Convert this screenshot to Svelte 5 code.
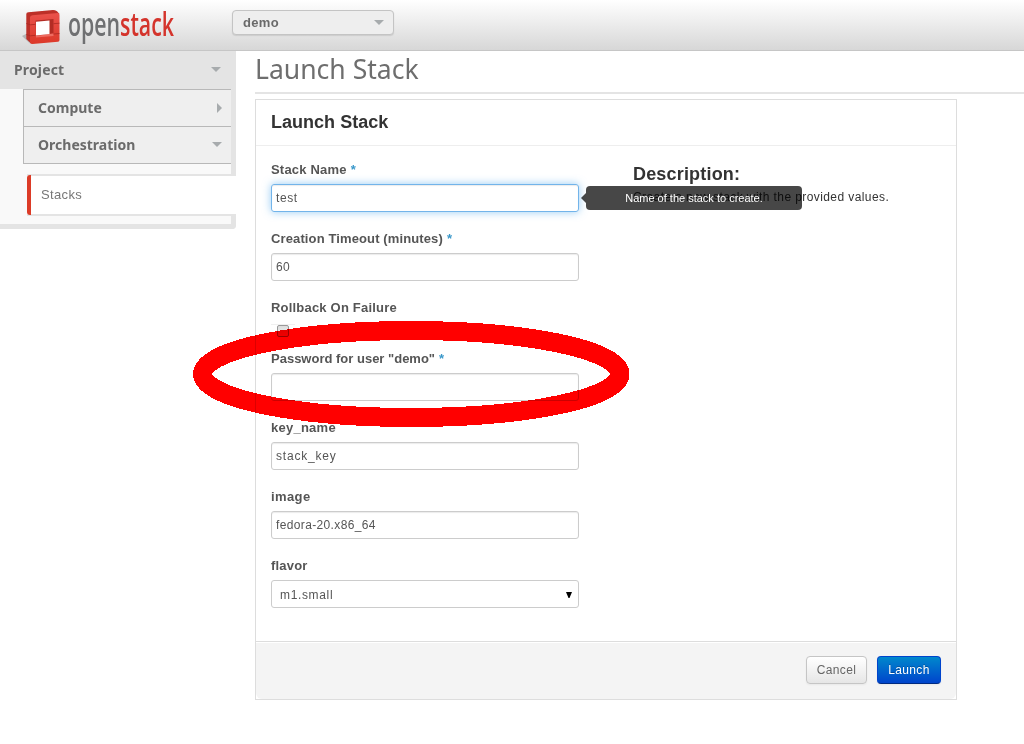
<script>
  const menu = [
    { label: 'Compute', open: false },
    { label: 'Orchestration', open: true }
  ];
  const fields = [
    { label: 'Stack Name', value: 'test', required: true, focused: true, help: 'Name of the stack to create.', ls: 0.2, vs: 0.6 },
    { label: 'Creation Timeout (minutes)', value: '60', required: true, ls: 0.12, vs: 0.3 },
    { label: 'Rollback On Failure', checkbox: true, ls: 0.2 },
    { label: 'Password for user "demo"', value: '', required: true, ls: 0 },
    { label: 'key_name', value: 'stack_key', ls: 0.25, vs: 0.8 },
    { label: 'image', value: 'fedora-20.x86_64', ls: 0.4, vs: 0.36 },
    { label: 'flavor', value: 'm1.small', select: true, ls: 0.2, vs: 0.65 }
  ];
</script>

<div class="page">
  <header>
    <svg class="logo" width="156" height="44" viewBox="0 0 156 44">
      <defs>
        <linearGradient id="face" x1="0" y1="0" x2="0" y2="1">
          <stop offset="0" stop-color="#ea524b" /><stop offset=".5" stop-color="#e2443a" /><stop offset="1" stop-color="#dc3929" />
        </linearGradient>
      </defs>
      <path d="M0 30l5-2.500 3 10z" fill="#aaa" opacity=".8" />
      <path d="M4.300 8q0-1.500 2-1.800L31 4q2 0 4 1.200L37.500 8 10 11.500 9.500 38 4.300 33z" fill="#bd3028" />
      <path d="M8 11.500q0-2 2.500-2.200L36 7q1.500 0 1.500 2V34q0 1.500-1.500 1.700L10.500 38q-2.500 0-2.500-2z" fill="url(#face)" />
      <path d="M13.500 14.500l18-1.500v14.500l-4 .5L14 30z" fill="#b32c24" />
      <path d="M14 30l13.500-2 4-.5v2.500L14 31.500z" fill="#ee6b60" />
      <path d="M14 15.800l13.500-1.200V28L14 29.500z" fill="#fff" />
      <path d="M4.300 17.500l4.200 1.300 5-.5M4.300 28.500l4.200 1.300 5-.5M31.500 17.700l6-.5M31.500 28l6-.5" fill="none" stroke="#a92a22" stroke-width=".8" />
      <text x="46" y="29.700" textLength="106" lengthAdjust="spacingAndGlyphs" fill="#6f7072">open<tspan fill="#d4342c">stack</tspan></text>
    </svg>
    <div class="tenant"><span>demo</span><i class="down"></i></div>
  </header>

  <div class="body">
    <aside>
      <div class="project"><span>Project</span><i class="down"></i></div>
      <nav>
        {#each menu as item}
          <div class="panel"><span>{item.label}</span><i class={item.open ? 'down' : 'right'}></i></div>
        {/each}
      </nav>
      <div class="active"><span>Stacks</span></div>
    </aside>

    <main>
      <h1><span>Launch Stack</span></h1>
      <section>
        <h3>Launch Stack</h3>
        <div class="content">
          <form>
            {#each fields as f}
              <div class="field" class:check={f.checkbox}>
                <div class="label"><span style="letter-spacing:{f.ls}px">{f.label}</span>{#if f.required}<b>*</b>{/if}</div>
                {#if f.checkbox}
                  <div class="checkwrap"><div class="box"></div></div>
                {:else}
                  <div class="input" class:focused={f.focused} class:select={f.select}>
                    <span style="letter-spacing:{f.vs ?? 0}px">{f.value}</span>
                    {#if f.select}<svg width="6" height="6" viewBox="0 0 6 6"><path d="M0 0h6L3.500 6h-1z" /></svg>{/if}
                    {#if f.help}<div class="tip">{f.help}</div>{/if}
                  </div>
                {/if}
              </div>
            {/each}
          </form>
          <div class="desc">
            <h4>Description:</h4>
            <p>Create a new stack with the provided values.</p>
          </div>
        </div>
        <footer>
          <div class="btn">Cancel</div>
          <div class="btn primary">Launch</div>
        </footer>
      </section>
    </main>
  </div>

  <svg class="ring" width="438" height="108" viewBox="0 0 438 108" shape-rendering="crispEdges">
    <ellipse cx="218.300" cy="54" rx="208.700" ry="43.500" fill="none" stroke="#f00" stroke-width="19" />
  </svg>
</div>

<style>
  :global(body) { background: #fff; overflow: hidden; }
  .page { position: relative; height: 744px; font: 12px/18px "Liberation Sans", sans-serif; color: #333; background: #fff; overflow: hidden; white-space: nowrap; }
  .page :global(*) { box-sizing: border-box; }
  header { display: flex; height: 51px; background: linear-gradient(#fff, #d7d7d7); border-bottom: 1px solid #c6c6c6; padding-left: 22px; }
  .logo { margin-top: 6px; flex: none; overflow: visible; }
  .logo text { font: 600 32px "Open Sans", sans-serif; }
  .tenant { margin: 10px 0 0 54px; width: 162px; height: 25px; border: 1px solid #c4c4c4; border-radius: 4px; background: #eee; box-shadow: 0 1px 1px #ccc; display: flex; align-items: center; justify-content: space-between; padding: 0 9px 0 10px; font: bold 13px "Liberation Sans", sans-serif; letter-spacing: .35px; color: #6a6a6a; }
  i { display: block; width: 0; height: 0; }
  .down { border: 5px solid transparent; border-top-color: #a7abad; border-bottom: 0; }
  .right { border: 5px solid transparent; border-left-color: #a7abad; border-right: 0; }
  .body { display: flex; }
  aside { width: 236px; height: 178px; background: #f9f9f9; border-right: 5px solid #e4e4e4; border-bottom: 5px solid #e4e4e4; border-bottom-right-radius: 4px; font: bold 14px "Noto Sans", sans-serif; color: #6b6b6b; flex: none; }
  .project { height: 38px; background: #e4e4e4; display: flex; align-items: center; justify-content: space-between; padding: 0 10px 1px 14px; letter-spacing: .15px; }
  nav { margin-left: 23px; border: 1px solid #b8b8b8; border-right: 0; background: #efefef; }
  .panel { height: 36px; display: flex; align-items: center; justify-content: space-between; padding: 0 9px 0 14px; }
  .panel span { margin-top: -2px; }
  .panel + .panel { height: 37px; border-top: 1px solid #b8b8b8; }
  .panel .down { margin-top: -2px; }
  .active { height: 42px; width: 209px; margin: 10px 0 0 27px; border: solid #e4e4e4; border-width: 2px 0; background: #fff; position: relative; padding: 0 0 2px 14px; display: flex; align-items: center; font: 13px "Liberation Sans", sans-serif; letter-spacing: .35px; color: #777; }
  .active::before { content: ""; position: absolute; left: 0; top: -1px; width: 4px; height: 40px; border-radius: 3px 0 0 3px; background: #dc3b27; }
  main { margin-left: 19px; flex: 1; }
  h1 { margin: 0; height: 43px; border-bottom: 2px solid #e4e4e4; font: 28px/35px "Noto Sans", sans-serif; color: #6e6e6e; }
  h1 span { display: inline-block; transform: scaleX(.948); transform-origin: 0 0; }
  section { margin-top: 5px; width: 702px; height: 601px; border: 1px solid #ddd; display: flex; flex-direction: column; }
  h3 { margin: 0; height: 46px; border-bottom: 1px solid #eee; padding: 0 15px; font: bold 18px/44px "Liberation Sans", sans-serif; letter-spacing: .02px; color: #333; }
  .content { flex: 1; padding: 15px 15px 0; display: flex; }
  form { width: 308px; }
  .field { height: 69px; }
  .check { height: 51px; }
  .label { height: 23px; font: bold 13px/18px "Liberation Sans", sans-serif; color: #555; }
  .label b { color: #3a98ca; margin-left: 4px; }
  .input { position: relative; height: 28px; border: 1px solid #ccc; border-radius: 3px; box-shadow: inset 0 1px 1px rgba(0,0,0,.08); display: flex; align-items: center; padding: 0 4px; font-size: 12px; color: #555; }
  .focused { border-color: #72b4ea; box-shadow: inset 0 1px 1px rgba(0,0,0,.08), 0 0 8px rgba(82,168,236,.6); }
  .select { padding: 1px 6px 0 8px; justify-content: space-between; box-shadow: none; }
  .checkwrap { width: 24px; height: 20px; margin-top: 2px; border-top: 1px solid #f0f0f0; }
  .box { width: 12px; height: 12px; border: 1px solid #999; border-radius: 2px; background: linear-gradient(#ddd, #eee); margin-left: 6px; }
  .tip { position: absolute; left: 314px; top: 1px; width: 216px; height: 24px; border-radius: 4px; background: rgba(0,0,0,.72); color: #fff; font-size: 11px; line-height: 24px; text-align: center; letter-spacing: 0; }
  .tip::before { content: ""; position: absolute; left: -5px; top: 7px; border: 5px solid transparent; border-right-color: rgba(0,0,0,.72); border-left: 0; }
  .desc { margin-left: 54px; }
  h4 { margin: 4px 0 0; font: bold 18px/18px "Liberation Sans", sans-serif; letter-spacing: .18px; color: #333; }
  p { margin: 5px 0 0; font-size: 12px; letter-spacing: .41px; }
  footer { height: 58px; background: #f4f4f4; border-top: 1px solid #ddd; box-shadow: inset 0 1px #fff; padding: 14px 15px 0; display: flex; justify-content: flex-end; gap: 10px; border-radius: 0 0 6px 6px; }
  .btn { width: 61px; height: 28px; border: 1px solid #c5c5c5; border-radius: 4px; background: linear-gradient(#fff, #e6e6e6); box-shadow: 0 1px 2px rgba(0,0,0,.05); text-align: center; line-height: 26px; font-size: 12px; letter-spacing: .35px; color: #666; }
  .primary { width: 64px; color: #fff; background: linear-gradient(#0088cc, #0044cc); border-color: #04c #04c #002a80; text-shadow: 0 -1px rgba(0,0,0,.25); }
  .ring { position: absolute; left: 193px; top: 320px; mix-blend-mode: multiply; }
</style>
